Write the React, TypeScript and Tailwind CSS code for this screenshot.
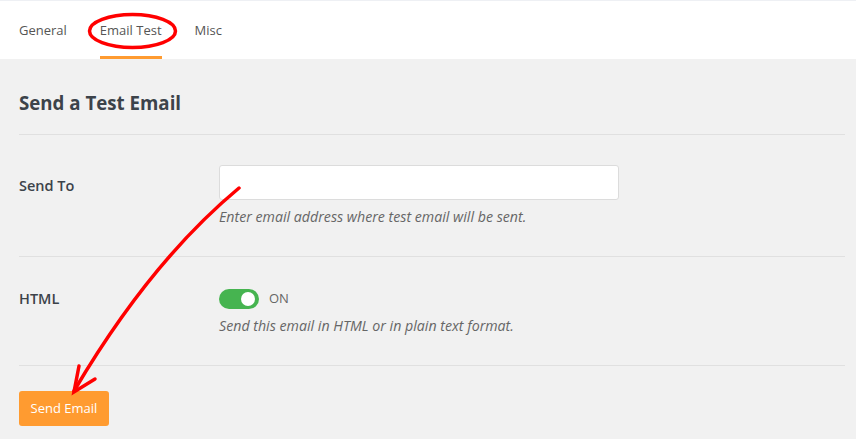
const font = { fontFamily: '"Open Sans", "Noto Sans", Arial, sans-serif' };

const tabs = ["General", "Email Test", "Misc"];

const Annotations = () => (
  <svg
    className="pointer-events-none absolute left-0 top-0"
    width={856}
    height={439}
    viewBox="0 0 856 439"
  >
    <ellipse cx="132.5" cy="31" rx="43" ry="16.5" fill="none" stroke="#ff0000" strokeWidth="3.5" />
    <path d="M239 188 Q150 262 74 391" fill="none" stroke="#ff0000" strokeWidth="3.5" strokeLinecap="round" />
    <path d="M79 366 L74 392 L95 379" fill="none" stroke="#ff0000" strokeWidth="3.5" strokeLinecap="round" strokeLinejoin="miter" />
  </svg>
);

export default function App() {
  return (
    <div className="relative h-[439px] w-[856px] overflow-hidden bg-[#f1f1f1]" style={font}>
      <div className="flex h-[59px] gap-[33px] border-t border-[#eef0f4] bg-white pl-[19px]">
        {tabs.map((t) => (
          <div
            key={t}
            className={`flex h-full items-center border-b-[3px] pt-[5px] text-[13px] ${
              t === "Email Test" ? "border-[#ff9b30] text-[#555]" : "border-transparent text-[#555]"
            }`}
          >
            {t}
          </div>
        ))}
      </div>

      <div className="pl-[19px] pr-[11px]">
        <h2 className="border-b border-[#e0e0e0] pb-[18px] pt-[31px] text-[18.7px] font-bold leading-[26px] text-[#3c434a]">
          Send a Test Email
        </h2>

        <div className="flex border-b border-[#e0e0e0] pb-[30px] pt-[30px]">
          <div className="w-[200px] pt-[11px] text-[14.5px] font-semibold leading-[20px] text-[#3c434a]">Send To</div>
          <div>
            <input className="block h-[35px] w-[400px] rounded-[3px] border border-[#dcdcdc] bg-white px-2 text-[14px] outline-none" />
            <p className="mt-[8px] text-[14.2px] italic leading-[18px] text-[#666]">
              Enter email address where test email will be sent.
            </p>
          </div>
        </div>

        <div className="flex border-b border-[#e0e0e0] pb-[30px] pt-[32px]">
          <div className="w-[200px] text-[14.5px] font-semibold leading-[20px] text-[#3c434a]">HTML</div>
          <div>
            <div className="flex h-[20px] items-center gap-[10px]">
              <div className="flex h-[20px] w-[40px] items-center justify-end rounded-full bg-[#46b450] pr-[4px]">
                <div className="h-[14px] w-[14px] rounded-full bg-white" />
              </div>
              <span className="text-[13px] text-[#666]">ON</span>
            </div>
            <p className="mt-[8px] text-[14.2px] italic leading-[18px] text-[#666]">
              Send this email in HTML or in plain text format.
            </p>
          </div>
        </div>

        <button className="mt-[25px] flex h-[35px] w-[90px] items-center justify-center rounded-[3px] bg-[#ff9b30] text-[13px] text-white">
          Send Email
        </button>
      </div>

      <Annotations />
    </div>
  );
}
